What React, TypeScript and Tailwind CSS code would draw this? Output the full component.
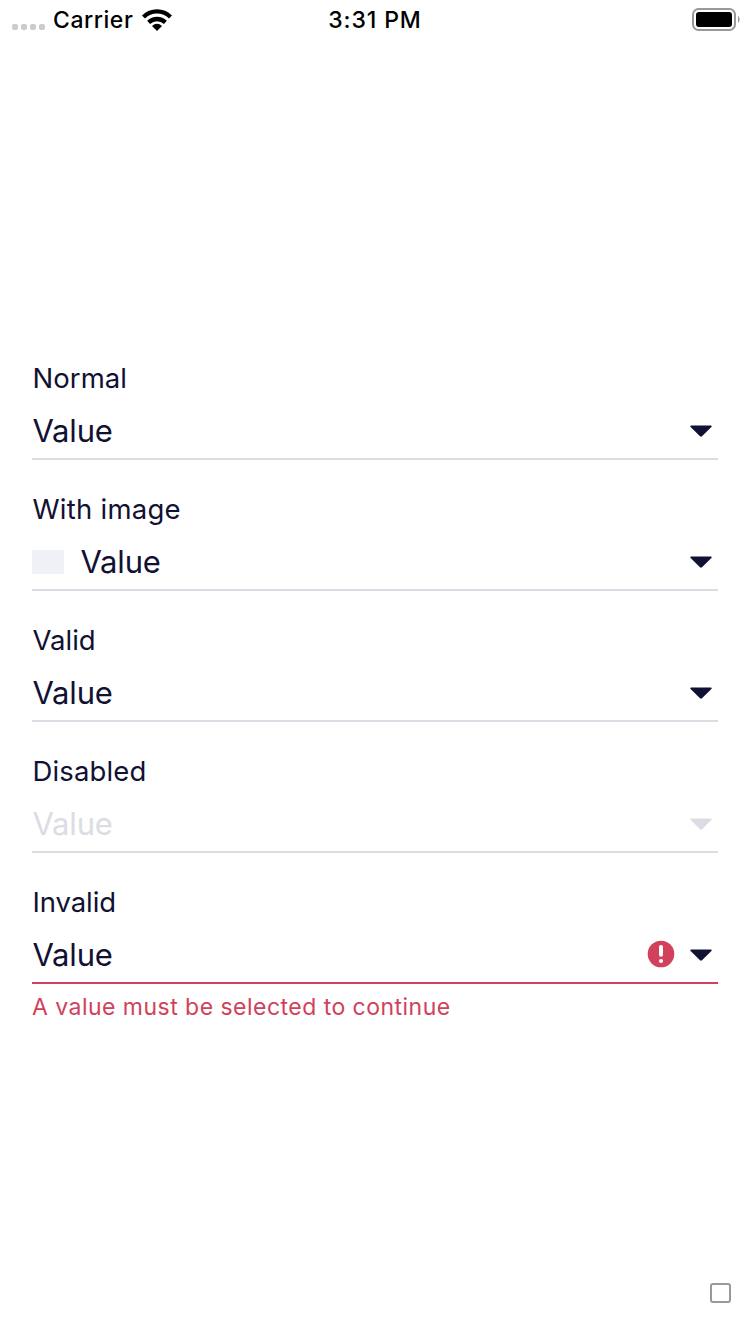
import React from 'react';

type FieldProps = {
  label: string;
  labelClass?: string;
  image?: boolean;
  disabled?: boolean;
  error?: string;
};

function Caret() {
  return (
    <svg width="24" height="14" viewBox="0 0 24 14" fill="currentColor" aria-hidden="true">
      <path d="M2.2 1.4H21.8C22.8 1.4 23 2.4 22.4 3L13 12.2Q12 13.1 11 12.2L1.6 3C1 2.4 1.2 1.4 2.2 1.4Z" />
    </svg>
  );
}

function ErrorIcon() {
  return (
    <svg width="28" height="28" viewBox="0 0 28 28" aria-hidden="true">
      <circle cx="14" cy="14" r="13.3" fill="#d1415b" />
      <path d="M14 7V14.7" stroke="#fff" strokeWidth="4" strokeLinecap="round" />
      <circle cx="14" cy="21" r="2.1" fill="#fff" />
    </svg>
  );
}

function SelectField({ label, labelClass = 'tracking-[0.2px]', image, disabled, error }: FieldProps) {
  return (
    <div className="h-[131px]">
      <div className={`h-9 pl-[0.5px] text-[27.5px] leading-9 ${labelClass}`}>{label}</div>
      <div
        className={`flex h-16 items-center border-b-2 pt-2 pr-[5px] ${error ? 'border-[#d1415b]' : 'border-[#dcdce5]'} ${disabled ? 'text-[#dcdce5]' : ''}`}
      >
        {image && <span className="mr-4 h-6 w-8 bg-[#f0f1f7]" />}
        <span className="flex-1 pl-[0.5px] text-[31px] leading-9 tracking-[-0.2px]">Value</span>
        {error && (
          <span className="mr-[14px] -mt-[2px]">
            <ErrorIcon />
          </span>
        )}
        <Caret />
      </div>
      {error && (
        <div className="pt-[5px] text-[23px] leading-9 tracking-[0.47px] text-[#d1415b]">{error}</div>
      )}
    </div>
  );
}

function StatusBar() {
  return (
    <header className="grid h-10 grid-cols-3 items-center pr-[9px] pl-3 text-[23px] font-medium text-black">
      <div className="flex items-center">
        <div className="mt-[14px] flex gap-[3px]">
          <i className="size-[6px] rounded-[2px] bg-[#cccccc]" />
          <i className="size-[6px] rounded-[2px] bg-[#cccccc]" />
          <i className="size-[6px] rounded-[2px] bg-[#cccccc]" />
          <i className="size-[6px] rounded-[2px] bg-[#cccccc]" />
        </div>
        <span className="ml-2 tracking-[0.55px]">Carrier</span>
        <svg className="ml-2" width="32" height="24" viewBox="0 0 32 24" fill="none" stroke="#000" aria-hidden="true">
          <path d="M2.5 9C10 1.6 22 1.6 29.5 9" strokeWidth="4.3" />
          <path d="M7.6 14.3C12.4 9.9 19.6 9.9 24.4 14.3" strokeWidth="4.3" />
          <path d="M11 17.9Q16 13.7 21 17.9L16 23Z" fill="#000" stroke="none" />
        </svg>
      </div>
      <div className="-ml-[3px] text-center tracking-[0.9px]">3:31 PM</div>
      <svg className="justify-self-end" width="49" height="24" viewBox="0 0 49 24" aria-hidden="true">
        <rect x="1" y="1" width="42" height="21" rx="5.5" fill="none" stroke="#999" strokeWidth="2" />
        <rect x="4" y="4" width="36" height="15" rx="3" />
        <path d="M46 7.8Q49.4 11.5 46 15.2Z" fill="#999" />
      </svg>
    </header>
  );
}

export default function App() {
  return (
    <div className="flex h-[1334px] w-[750px] flex-col bg-white font-['Inter',sans-serif] text-[#111133]">
      <StatusBar />
      <main className="mt-80 flex-1 px-8">
        <SelectField label="Normal" labelClass="tracking-[0.05px]" />
        <SelectField label="With image" labelClass="tracking-[0.25px]" image />
        <SelectField label="Valid" labelClass="tracking-[0px]" />
        <SelectField label="Disabled" labelClass="tracking-[0.15px]" disabled />
        <SelectField label="Invalid" labelClass="tracking-[-0.1px]" error="A value must be selected to continue" />
      </main>
      <footer className="flex justify-end pr-[19px] pb-[31px]">
        <div className="h-5 w-[21px] rounded-[3px] border-2 border-[#999999]" />
      </footer>
    </div>
  );
}
